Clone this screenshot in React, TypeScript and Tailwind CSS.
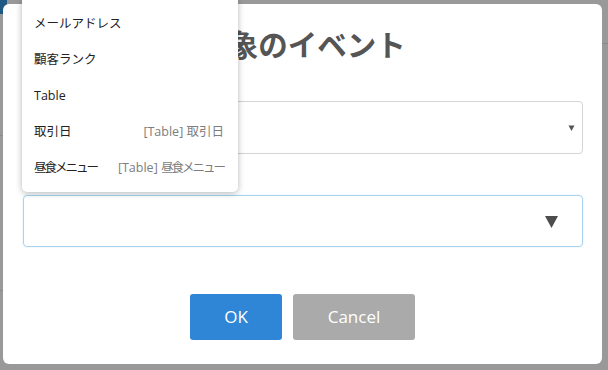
import React from "react";

const jp = { fontFamily: '"Open Sans", "Noto Sans CJK JP", sans-serif' };

const menuItems = [
  { label: "メールアドレス", hint: "", tight: false },
  { label: "顧客ランク", hint: "", tight: false },
  { label: "Table", hint: "", tight: false },
  { label: "取引日", hint: "取引日", tight: false },
  { label: "昼食メニュー", hint: "昼食メニュー", tight: true },
];

function Caret({ className }: { className: string }) {
  return (
    <svg className={className} viewBox="0 0 12 12" fill="currentColor">
      <path d="M0 1h12L6 12z" />
    </svg>
  );
}

export default function App() {
  return (
    <div className="relative h-[370px] w-[608px] overflow-hidden bg-[#999999]" style={jp}>
      {/* page behind the overlay */}
      <div className="absolute left-0 top-0 h-[14px] w-[7px] bg-[#1f5a85]" />
      <div className="absolute right-0 top-[43px] h-px w-[6px] bg-[#8a8a8a]" />
      <div className="absolute left-0 top-[135px] h-px w-[3px] bg-[#8a8a8a]" />
      <div className="absolute left-0 top-[290px] h-px w-[3px] bg-[#8a8a8a]" />

      {/* modal */}
      <div className="absolute left-[3px] top-[4px] flex h-[360px] w-[599px] flex-col rounded-[6px] bg-white px-[20px]">
        <h1 className="mt-[20px] flex h-[42px] items-center justify-center text-[29.5px] font-bold text-[#555555]">
          対象のイベント
        </h1>
        <div className="h-[35px]" />
        <div className="flex h-[53px] w-[560px] items-center justify-end rounded-[4px] border border-[#d4d4d4] pr-[7px]">
          <Caret className="h-[6px] w-[7px] text-[#555555]" />
        </div>
        <div className="h-[41px]" />
        <div className="flex h-[52px] w-[560px] items-center justify-end rounded-[4px] border border-[#a8d4ef] pr-[24px] shadow-[0_0_2px_rgba(120,190,235,0.35)]">
          <Caret className="h-[13px] w-[13px] text-[#4d4d4d]" />
        </div>
        <div className="mt-[47px] flex justify-center gap-[11px]">
          <button className="h-[46px] w-[92px] rounded-[3px] bg-[#2f86d6] text-[17px] text-white">OK</button>
          <button className="h-[46px] w-[122px] rounded-[3px] bg-[#aaaaaa] text-[17px] text-white">Cancel</button>
        </div>
      </div>

      {/* dropdown menu */}
      <div className="absolute left-[22px] top-0 flex h-[192px] w-[216px] flex-col rounded-b-[5px] bg-white pt-[6px] shadow-[0_1px_6px_rgba(0,0,0,0.3)]">
        {menuItems.map((item) => (
          <div key={item.label} className="flex h-[36px] items-center justify-between gap-2 whitespace-nowrap pl-[12px] pr-[14px] text-[12.5px]">
            <span className={item.tight ? "tracking-[-2px] text-[#222222]" : "text-[#222222]"}>{item.label}</span>
            {item.hint && (
              <span className="text-[#7d7d7d]">
                [Table] <span className={item.tight ? "tracking-[-2px]" : ""}>{item.hint}</span>
              </span>
            )}
          </div>
        ))}
      </div>
    </div>
  );
}
